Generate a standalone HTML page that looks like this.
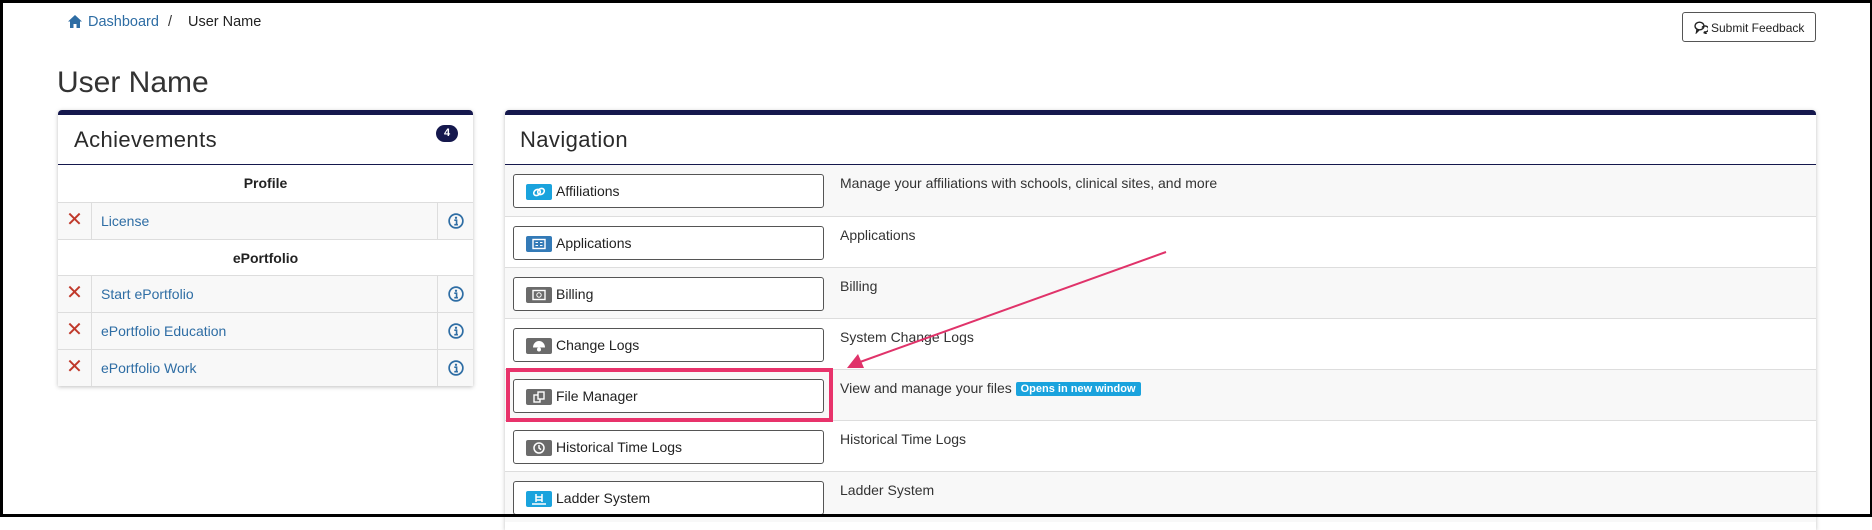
<!DOCTYPE html>
<html><head><meta charset="utf-8">
<style>
*{box-sizing:border-box;margin:0;padding:0}
html,body{width:1872px;height:517px;overflow:hidden;background:#fff;font-family:"Liberation Sans",Arial,sans-serif;color:#333}
#frame{position:absolute;left:0;top:0;width:1872px;height:517px;border:3px solid #000;border-right-width:2px;border-bottom-width:3px;z-index:50;pointer-events:none}
.abs{position:absolute}
.bc{top:14px;font-size:14.5px}
.card{position:absolute;top:110px;background:#fff;border-top:5px solid #15184d;border-radius:4px 4px 0 0;box-shadow:0 1px 4px rgba(0,0,0,.25)}
.card .hd{height:50px;border-bottom:1.5px solid #15184d;position:relative}
.card .hd span{position:absolute;top:12px;font-size:22px;color:#2a2a2a;letter-spacing:.4px}
.arow{position:absolute;left:0;width:415px;height:37px;border-top:1px solid #ddd;font-size:14px}
.sec{background:#fff;text-align:center;font-weight:bold;line-height:36px;color:#222}
.item{background:#f8f8f8}
.item .x{position:absolute;left:0;top:0;width:34px;height:36px;border-right:1px solid #ddd;color:#c0392b;font-size:20px;text-align:center;line-height:34px}
.item .t{position:absolute;left:43px;top:10px;color:#2e6da4}
.item .i{position:absolute;right:0;top:0;width:36px;height:36px;border-left:1px solid #ddd}
.item .i svg{position:absolute;left:10px;top:10px}
.nrow{position:absolute;left:0;width:1311px;height:51px;border-top:1px solid #ddd}
.g{background:#f8f8f8}
.btn{position:absolute;left:8px;top:9px;width:311px;height:34px;border:1px solid #555;border-radius:3px;background:#fff;font-size:14px}
.btn .ic{position:absolute;left:12px;top:9px;width:26px;height:16px;border-radius:2px}
.btn .lb{position:absolute;left:42px;top:8px;color:#222}
.desc{position:absolute;left:335px;top:10px;font-size:14px;color:#333}
</style></head><body>
<div id="frame"></div>

<svg class="abs" style="left:68px;top:15px" width="14" height="13" viewBox="0 0 14 13"><path d="M7 0L0 6.5h2V13h3.5V9h3v4H12V6.5h2z" fill="#2e6da4"/></svg>
<div class="abs bc" style="left:88px;color:#2e6da4">Dashboard</div>
<div class="abs bc" style="left:168px;color:#333">/</div>
<div class="abs bc" style="left:188px;color:#222">User Name</div>

<div class="abs" style="left:1682px;top:12px;width:134px;height:30px;border:1px solid #555;border-radius:3px;font-size:12px;color:#222">
<svg class="abs" style="left:11px;top:8px" width="14" height="13" viewBox="0 0 14 13" fill="none" stroke="#222" stroke-width="1.4"><ellipse cx="5.5" cy="5" rx="4.5" ry="3.8"/><path d="M3 8.5L2.5 11.5 5 9"/><path d="M8 6.5a3.5 3 0 1 1 3 4.5l1 1.5-2.5-1"/></svg>
<span class="abs" style="left:28px;top:8px">Submit Feedback</span></div>

<div class="abs" style="left:57px;top:66px;font-size:30px;color:#333">User Name</div>

<!-- Achievements -->
<div class="card" style="left:58px;width:415px;height:276px">
 <div class="hd"><span style="left:16px">Achievements</span>
  <div class="abs" style="left:378px;top:10px;width:22px;height:17px;border-radius:9px;background:#15184d;color:#fff;font-size:11px;font-weight:bold;text-align:center;line-height:17px">4</div></div>
 <div class="arow sec" style="top:50px;border-top:none">Profile</div>
 <div class="arow item" style="top:87px"><div class="x">✕</div><div class="t">License</div><div class="i"><svg width="16" height="16" viewBox="0 0 14 14"><circle cx="7" cy="7" r="6" fill="none" stroke="#2e6da4" stroke-width="1.5"/><circle cx="7" cy="4.2" r="1" fill="#2e6da4"/><path d="M5.5 6.3h2v3.8M5.5 10.2h3.2" stroke="#2e6da4" stroke-width="1.4" fill="none"/></svg></div></div>
 <div class="arow sec" style="top:124px">ePortfolio</div>
 <div class="arow item" style="top:160px"><div class="x">✕</div><div class="t">Start ePortfolio</div><div class="i"><svg width="16" height="16" viewBox="0 0 14 14"><circle cx="7" cy="7" r="6" fill="none" stroke="#2e6da4" stroke-width="1.5"/><circle cx="7" cy="4.2" r="1" fill="#2e6da4"/><path d="M5.5 6.3h2v3.8M5.5 10.2h3.2" stroke="#2e6da4" stroke-width="1.4" fill="none"/></svg></div></div>
 <div class="arow item" style="top:197px"><div class="x">✕</div><div class="t">ePortfolio Education</div><div class="i"><svg width="16" height="16" viewBox="0 0 14 14"><circle cx="7" cy="7" r="6" fill="none" stroke="#2e6da4" stroke-width="1.5"/><circle cx="7" cy="4.2" r="1" fill="#2e6da4"/><path d="M5.5 6.3h2v3.8M5.5 10.2h3.2" stroke="#2e6da4" stroke-width="1.4" fill="none"/></svg></div></div>
 <div class="arow item" style="top:234px"><div class="x">✕</div><div class="t">ePortfolio Work</div><div class="i"><svg width="16" height="16" viewBox="0 0 14 14"><circle cx="7" cy="7" r="6" fill="none" stroke="#2e6da4" stroke-width="1.5"/><circle cx="7" cy="4.2" r="1" fill="#2e6da4"/><path d="M5.5 6.3h2v3.8M5.5 10.2h3.2" stroke="#2e6da4" stroke-width="1.4" fill="none"/></svg></div></div>
</div>

<!-- Navigation -->
<div class="card" style="left:505px;width:1311px;height:420px">
 <div class="hd"><span style="left:15px">Navigation</span></div>
 <div class="nrow g" style="top:50px;border-top:none"><div class="btn"><div class="ic" style="background:#1aa3dd"><svg width="26" height="16" viewBox="0 0 26 16" fill="none" stroke="#fff" stroke-width="1.6"><ellipse cx="11" cy="8.5" rx="3.5" ry="2.8" transform="rotate(-35 11 8.5)"/><ellipse cx="15" cy="7.5" rx="3.5" ry="2.8" transform="rotate(-35 15 7.5)"/></svg></div><div class="lb">Affiliations</div></div><div class="desc">Manage your affiliations with schools, clinical sites, and more</div></div>
 <div class="nrow" style="top:101px"><div class="btn"><div class="ic" style="background:#337ab7"><svg width="26" height="16" viewBox="0 0 26 16"><rect x="7" y="3.5" width="12" height="9" fill="none" stroke="#fff" stroke-width="1.4"/><path d="M9.5 6.5h2.5M9.5 9.5h2.5M14 6.5h2.5M14 9.5h2.5" stroke="#fff"/></svg></div><div class="lb">Applications</div></div><div class="desc">Applications</div></div>
 <div class="nrow g" style="top:152px"><div class="btn"><div class="ic" style="background:#6b6b6b"><svg width="26" height="16" viewBox="0 0 26 16"><rect x="7" y="3.5" width="12" height="9" fill="none" stroke="#fff" stroke-width="1.4"/><circle cx="13" cy="8" r="2.2" fill="none" stroke="#fff"/></svg></div><div class="lb">Billing</div></div><div class="desc">Billing</div></div>
 <div class="nrow" style="top:203px"><div class="btn"><div class="ic" style="background:#6b6b6b"><svg width="26" height="16" viewBox="0 0 26 16"><path d="M7 9.5c0-3.5 2.5-6.5 6-6.5s6 3 6 6.5z" fill="#fff"/><circle cx="13" cy="11.5" r="2" fill="#fff"/></svg></div><div class="lb">Change Logs</div></div><div class="desc">System Change Logs</div></div>
 <div class="nrow g" style="top:254px"><div class="btn"><div class="ic" style="background:#6b6b6b"><svg width="26" height="16" viewBox="0 0 26 16" fill="none" stroke="#fff" stroke-width="1.4"><rect x="8" y="6" width="6" height="7"/><rect x="12" y="3" width="6" height="7" fill="#6b6b6b"/></svg></div><div class="lb">File Manager</div></div><div class="desc">View and manage your files <span style="display:inline-block;background:#1aa3dd;color:#fff;font-size:11px;font-weight:bold;padding:1px 5px;border-radius:2px;vertical-align:1px">Opens in new window</span></div></div>
 <div class="nrow" style="top:305px"><div class="btn"><div class="ic" style="background:#6b6b6b"><svg width="26" height="16" viewBox="0 0 26 16" fill="none" stroke="#fff" stroke-width="1.5"><circle cx="13" cy="8" r="5"/><path d="M13 5v3l2 1.7"/></svg></div><div class="lb">Historical Time Logs</div></div><div class="desc">Historical Time Logs</div></div>
 <div class="nrow g" style="top:356px"><div class="btn"><div class="ic" style="background:#1aa3dd"><svg width="26" height="16" viewBox="0 0 26 16" fill="none" stroke="#fff" stroke-width="1.5"><path d="M10 3v8M16 3v8M10 6h6M10 9h6M6 13h14"/></svg></div><div class="lb">Ladder System</div></div><div class="desc">Ladder System</div></div>
</div>

<!-- highlight + arrow -->
<div class="abs" style="left:506px;top:368px;width:327px;height:54px;border:4px solid #e8336b;z-index:10"></div>
<svg class="abs" style="left:0;top:0;z-index:11" width="1872" height="517"><line x1="1166" y1="252" x2="860" y2="362" stroke="#e0336a" stroke-width="2"/><polygon points="847,368 858,354 864,368" fill="#e0336a"/></svg>
</body></html>
